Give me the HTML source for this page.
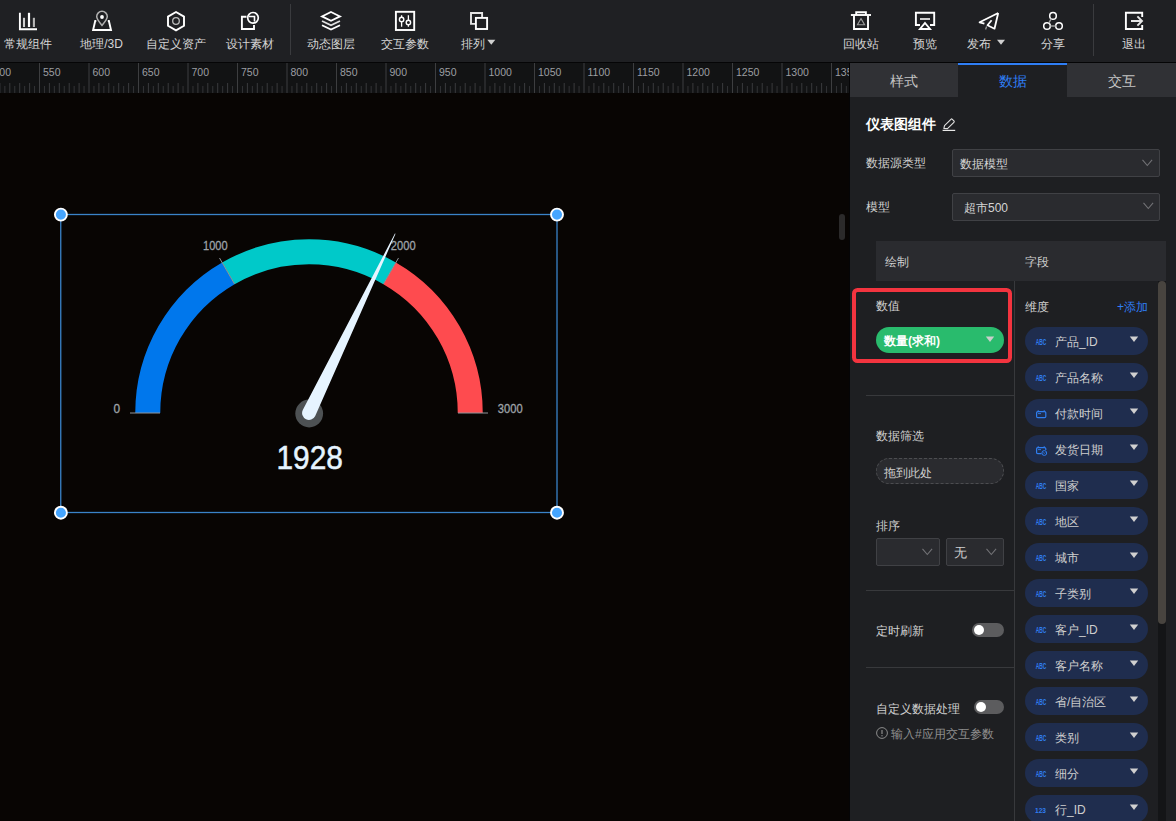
<!DOCTYPE html>
<html><head><meta charset="utf-8">
<style>
*{margin:0;padding:0;box-sizing:border-box}
html,body{width:1176px;height:821px;overflow:hidden;background:#1e1f22;font-family:"Liberation Sans",sans-serif;}
.abs{position:absolute}
.tl{position:absolute;top:36.5px;height:14px;line-height:14px;font-size:12px;color:#d4d4d4;white-space:nowrap;text-align:center}
.txt{position:absolute;margin-top:0.6px;white-space:nowrap;font-size:12px;line-height:14px;color:#d0d0d0}
</style></head><body>
<div class="abs" style="left:0;top:0;width:1176px;height:62px;background:#1f2023"></div>
<svg class="abs" style="left:0;top:0" width="1176" height="62" viewBox="0 0 1176 62">
<g stroke-linecap="butt" stroke-linejoin="miter">
<!-- chart -->
<path d="M19.9 12.8V29.2H37" stroke="#fff" fill="none" stroke-width="1.9"/>
<path d="M24 17.8V27" stroke="#cfcfcf" stroke-width="2.1" fill="none"/>
<path d="M29 12.8V27" stroke="#fff" stroke-width="2.2" fill="none"/>
<path d="M33.9 17.8V27" stroke="#b8b8b8" stroke-width="2.1" fill="none"/>
<!-- map -->
<path d="M102 25.4 C99 21.8 96.7 19.3 96.7 16.6 A5.3 5.3 0 0 1 107.3 16.6 C107.3 19.3 105 21.8 102 25.4Z" stroke="#b0b0b0" stroke-width="1.5" fill="none"/>
<circle cx="102" cy="17" r="1.9" fill="#fff"/>
<path d="M96.3 21H95.2L93.1 30H111L108.9 21H107.8" stroke="#fff" fill="none" stroke-width="1.9"/>
<!-- hexagon -->
<path d="M176 12L184 16.6V25.8L176 30.4L168 25.8V16.6Z" stroke="#fff" fill="none" stroke-width="1.9"/>
<circle cx="176" cy="21" r="3.3" stroke="#bdbdbd" stroke-width="1.3" fill="none"/>
<!-- design -->
<path d="M246.5 16.8H241.9V29H254V25" stroke="#fff" fill="none" stroke-width="1.9"/>
<circle cx="253" cy="17.8" r="5.3" stroke="#fff" fill="none" stroke-width="1.7"/>
<path d="M249 16.5H254.5V21.5" stroke="#fff" fill="none" stroke-width="1.6"/>
<!-- layers -->
<path d="M331 12L340 16.4L331 20.8L322 16.4Z" stroke="#fff" fill="none" stroke-width="1.8"/>
<path d="M322 21L331 25.3L340 21" stroke="#e0e0e0" stroke-width="1.8" fill="none"/>
<path d="M322 25.3L331 29.6L340 25.3" stroke="#fff" fill="none" stroke-width="1.8"/>
<!-- sliders -->
<rect x="395.9" y="11.8" width="18.3" height="18.2" stroke="#fff" fill="none" stroke-width="1.9"/>
<path d="M401.6 15.3V17.2M401.6 21.6V26.7M408.4 15.3V20.2M408.4 24.6V26.7" stroke="#fff" fill="none" stroke-width="1.3"/>
<circle cx="401.6" cy="19.4" r="2.2" stroke="#fff" fill="none" stroke-width="1.4"/>
<circle cx="408.4" cy="22.4" r="2.2" stroke="#fff" fill="none" stroke-width="1.4"/>
<!-- arrange -->
<path d="M475 23.9H471V13H482.1V17" stroke="#e4e4e4" stroke-width="1.9" fill="none"/>
<rect x="475.9" y="17.9" width="11.2" height="11.1" stroke="#fff" fill="none" stroke-width="1.9"/>
<!-- trash -->
<path d="M856.2 14.9V12.2H865.9V14.9" stroke="#fff" fill="none" stroke-width="1.9"/>
<path d="M850.9 15H871" stroke="#fff" fill="none" stroke-width="1.9"/>
<path d="M854 15.5V29H868V15.5" stroke="#fff" fill="none" stroke-width="1.9"/>
<path d="M861 18.6L864.6 24.8H857.4Z" stroke="#9c9c9c" stroke-width="1.1" fill="none"/>
<!-- preview -->
<path d="M920 25H915.9V12.8H934.2V25H930" stroke="#fff" fill="none" stroke-width="1.9"/>
<path d="M920 19H930" stroke="#d8d8d8" stroke-width="1.9" fill="none"/>
<path d="M925 23L930 29H920Z" stroke="#fff" fill="none" stroke-width="1.9"/>
<!-- send -->
<path d="M998.2 13L979.6 22.3L984.4 23.7M998.2 13L994.5 28.7L987.5 25.2L991.6 20.2" stroke="#fff" fill="none" stroke-width="1.8" stroke-linejoin="round"/>
<path d="M986.6 26.5L985.6 29.5" stroke="#9a9a9a" stroke-width="1.3" fill="none"/>
<!-- share -->
<circle cx="1053" cy="15.9" r="3.3" stroke="#fff" fill="none" stroke-width="1.5"/>
<circle cx="1047" cy="26" r="3.3" stroke="#fff" fill="none" stroke-width="1.5"/>
<circle cx="1059" cy="26" r="3.3" stroke="#fff" fill="none" stroke-width="1.5"/>
<path d="M1051.3 18.7L1048.8 23.2M1050.3 26H1055.7" stroke="#a0a0a0" stroke-width="1.4" fill="none"/>
<!-- exit -->
<path d="M1142.2 17V12.8H1125.9V29H1142.2V25" stroke="#fff" fill="none" stroke-width="1.9"/>
<path d="M1131 21H1141.5M1137.4 16.4L1142 21L1137.4 25.6" stroke="#e8e8e8" stroke-width="1.9" fill="none"/>
<!-- separators -->
<rect x="290" y="4" width="1" height="51" fill="#3a3b3e" stroke="none"/>
<rect x="1093" y="4" width="1" height="52" fill="#3a3b3e" stroke="none"/>
<!-- triangles -->
<path d="M487.3 39.8H495.3L491.3 44.8Z" fill="#d0d0d0" stroke="none"/>
<path d="M997 39.8H1005L1001 44.8Z" fill="#d0d0d0" stroke="none"/>
</g>
</svg>
<div class="tl" style="left:-22px;width:100px">常规组件</div><div class="tl" style="left:51.5px;width:100px">地理/3D</div><div class="tl" style="left:126px;width:100px">自定义资产</div><div class="tl" style="left:200px;width:100px">设计素材</div><div class="tl" style="left:281px;width:100px">动态图层</div><div class="tl" style="left:355px;width:100px">交互参数</div><div class="tl" style="left:422.7px;width:100px">排列</div><div class="tl" style="left:811.3px;width:100px">回收站</div><div class="tl" style="left:875.3px;width:100px">预览</div><div class="tl" style="left:929px;width:100px">发布</div><div class="tl" style="left:1003px;width:100px">分享</div><div class="tl" style="left:1083.5px;width:100px">退出</div>
<svg class="abs" style="left:0;top:62px" width="850" height="31" viewBox="0 62 850 31">
<rect x="0" y="62" width="850" height="1" fill="#050506"/>
<rect x="0" y="63" width="850" height="30" fill="#121314"/>
<g font-family="Liberation Sans" font-size="10.5" fill="#9c9ea2">
<rect x="-10.50" y="63" width="1" height="30" fill="#3d3e40"/>
<text x="-6.50" y="76">500</text>
<rect x="-5.55" y="86" width="1" height="7" fill="#333436"/>
<rect x="-0.60" y="83" width="1" height="10" fill="#3a3b3d"/>
<rect x="4.35" y="86" width="1" height="7" fill="#333436"/>
<rect x="9.30" y="83" width="1" height="10" fill="#3a3b3d"/>
<rect x="14.25" y="86" width="1" height="7" fill="#333436"/>
<rect x="19.20" y="83" width="1" height="10" fill="#3a3b3d"/>
<rect x="24.15" y="86" width="1" height="7" fill="#333436"/>
<rect x="29.10" y="83" width="1" height="10" fill="#3a3b3d"/>
<rect x="34.05" y="86" width="1" height="7" fill="#333436"/>
<rect x="39.00" y="63" width="1" height="30" fill="#3d3e40"/>
<text x="43.00" y="76">550</text>
<rect x="43.95" y="86" width="1" height="7" fill="#333436"/>
<rect x="48.90" y="83" width="1" height="10" fill="#3a3b3d"/>
<rect x="53.85" y="86" width="1" height="7" fill="#333436"/>
<rect x="58.80" y="83" width="1" height="10" fill="#3a3b3d"/>
<rect x="63.75" y="86" width="1" height="7" fill="#333436"/>
<rect x="68.70" y="83" width="1" height="10" fill="#3a3b3d"/>
<rect x="73.65" y="86" width="1" height="7" fill="#333436"/>
<rect x="78.60" y="83" width="1" height="10" fill="#3a3b3d"/>
<rect x="83.55" y="86" width="1" height="7" fill="#333436"/>
<rect x="88.50" y="63" width="1" height="30" fill="#3d3e40"/>
<text x="92.50" y="76">600</text>
<rect x="93.45" y="86" width="1" height="7" fill="#333436"/>
<rect x="98.40" y="83" width="1" height="10" fill="#3a3b3d"/>
<rect x="103.35" y="86" width="1" height="7" fill="#333436"/>
<rect x="108.30" y="83" width="1" height="10" fill="#3a3b3d"/>
<rect x="113.25" y="86" width="1" height="7" fill="#333436"/>
<rect x="118.20" y="83" width="1" height="10" fill="#3a3b3d"/>
<rect x="123.15" y="86" width="1" height="7" fill="#333436"/>
<rect x="128.10" y="83" width="1" height="10" fill="#3a3b3d"/>
<rect x="133.05" y="86" width="1" height="7" fill="#333436"/>
<rect x="138.00" y="63" width="1" height="30" fill="#3d3e40"/>
<text x="142.00" y="76">650</text>
<rect x="142.95" y="86" width="1" height="7" fill="#333436"/>
<rect x="147.90" y="83" width="1" height="10" fill="#3a3b3d"/>
<rect x="152.85" y="86" width="1" height="7" fill="#333436"/>
<rect x="157.80" y="83" width="1" height="10" fill="#3a3b3d"/>
<rect x="162.75" y="86" width="1" height="7" fill="#333436"/>
<rect x="167.70" y="83" width="1" height="10" fill="#3a3b3d"/>
<rect x="172.65" y="86" width="1" height="7" fill="#333436"/>
<rect x="177.60" y="83" width="1" height="10" fill="#3a3b3d"/>
<rect x="182.55" y="86" width="1" height="7" fill="#333436"/>
<rect x="187.50" y="63" width="1" height="30" fill="#3d3e40"/>
<text x="191.50" y="76">700</text>
<rect x="192.45" y="86" width="1" height="7" fill="#333436"/>
<rect x="197.40" y="83" width="1" height="10" fill="#3a3b3d"/>
<rect x="202.35" y="86" width="1" height="7" fill="#333436"/>
<rect x="207.30" y="83" width="1" height="10" fill="#3a3b3d"/>
<rect x="212.25" y="86" width="1" height="7" fill="#333436"/>
<rect x="217.20" y="83" width="1" height="10" fill="#3a3b3d"/>
<rect x="222.15" y="86" width="1" height="7" fill="#333436"/>
<rect x="227.10" y="83" width="1" height="10" fill="#3a3b3d"/>
<rect x="232.05" y="86" width="1" height="7" fill="#333436"/>
<rect x="237.00" y="63" width="1" height="30" fill="#3d3e40"/>
<text x="241.00" y="76">750</text>
<rect x="241.95" y="86" width="1" height="7" fill="#333436"/>
<rect x="246.90" y="83" width="1" height="10" fill="#3a3b3d"/>
<rect x="251.85" y="86" width="1" height="7" fill="#333436"/>
<rect x="256.80" y="83" width="1" height="10" fill="#3a3b3d"/>
<rect x="261.75" y="86" width="1" height="7" fill="#333436"/>
<rect x="266.70" y="83" width="1" height="10" fill="#3a3b3d"/>
<rect x="271.65" y="86" width="1" height="7" fill="#333436"/>
<rect x="276.60" y="83" width="1" height="10" fill="#3a3b3d"/>
<rect x="281.55" y="86" width="1" height="7" fill="#333436"/>
<rect x="286.50" y="63" width="1" height="30" fill="#3d3e40"/>
<text x="290.50" y="76">800</text>
<rect x="291.45" y="86" width="1" height="7" fill="#333436"/>
<rect x="296.40" y="83" width="1" height="10" fill="#3a3b3d"/>
<rect x="301.35" y="86" width="1" height="7" fill="#333436"/>
<rect x="306.30" y="83" width="1" height="10" fill="#3a3b3d"/>
<rect x="311.25" y="86" width="1" height="7" fill="#333436"/>
<rect x="316.20" y="83" width="1" height="10" fill="#3a3b3d"/>
<rect x="321.15" y="86" width="1" height="7" fill="#333436"/>
<rect x="326.10" y="83" width="1" height="10" fill="#3a3b3d"/>
<rect x="331.05" y="86" width="1" height="7" fill="#333436"/>
<rect x="336.00" y="63" width="1" height="30" fill="#3d3e40"/>
<text x="340.00" y="76">850</text>
<rect x="340.95" y="86" width="1" height="7" fill="#333436"/>
<rect x="345.90" y="83" width="1" height="10" fill="#3a3b3d"/>
<rect x="350.85" y="86" width="1" height="7" fill="#333436"/>
<rect x="355.80" y="83" width="1" height="10" fill="#3a3b3d"/>
<rect x="360.75" y="86" width="1" height="7" fill="#333436"/>
<rect x="365.70" y="83" width="1" height="10" fill="#3a3b3d"/>
<rect x="370.65" y="86" width="1" height="7" fill="#333436"/>
<rect x="375.60" y="83" width="1" height="10" fill="#3a3b3d"/>
<rect x="380.55" y="86" width="1" height="7" fill="#333436"/>
<rect x="385.50" y="63" width="1" height="30" fill="#3d3e40"/>
<text x="389.50" y="76">900</text>
<rect x="390.45" y="86" width="1" height="7" fill="#333436"/>
<rect x="395.40" y="83" width="1" height="10" fill="#3a3b3d"/>
<rect x="400.35" y="86" width="1" height="7" fill="#333436"/>
<rect x="405.30" y="83" width="1" height="10" fill="#3a3b3d"/>
<rect x="410.25" y="86" width="1" height="7" fill="#333436"/>
<rect x="415.20" y="83" width="1" height="10" fill="#3a3b3d"/>
<rect x="420.15" y="86" width="1" height="7" fill="#333436"/>
<rect x="425.10" y="83" width="1" height="10" fill="#3a3b3d"/>
<rect x="430.05" y="86" width="1" height="7" fill="#333436"/>
<rect x="435.00" y="63" width="1" height="30" fill="#3d3e40"/>
<text x="439.00" y="76">950</text>
<rect x="439.95" y="86" width="1" height="7" fill="#333436"/>
<rect x="444.90" y="83" width="1" height="10" fill="#3a3b3d"/>
<rect x="449.85" y="86" width="1" height="7" fill="#333436"/>
<rect x="454.80" y="83" width="1" height="10" fill="#3a3b3d"/>
<rect x="459.75" y="86" width="1" height="7" fill="#333436"/>
<rect x="464.70" y="83" width="1" height="10" fill="#3a3b3d"/>
<rect x="469.65" y="86" width="1" height="7" fill="#333436"/>
<rect x="474.60" y="83" width="1" height="10" fill="#3a3b3d"/>
<rect x="479.55" y="86" width="1" height="7" fill="#333436"/>
<rect x="484.50" y="63" width="1" height="30" fill="#3d3e40"/>
<text x="488.50" y="76">1000</text>
<rect x="489.45" y="86" width="1" height="7" fill="#333436"/>
<rect x="494.40" y="83" width="1" height="10" fill="#3a3b3d"/>
<rect x="499.35" y="86" width="1" height="7" fill="#333436"/>
<rect x="504.30" y="83" width="1" height="10" fill="#3a3b3d"/>
<rect x="509.25" y="86" width="1" height="7" fill="#333436"/>
<rect x="514.20" y="83" width="1" height="10" fill="#3a3b3d"/>
<rect x="519.15" y="86" width="1" height="7" fill="#333436"/>
<rect x="524.10" y="83" width="1" height="10" fill="#3a3b3d"/>
<rect x="529.05" y="86" width="1" height="7" fill="#333436"/>
<rect x="534.00" y="63" width="1" height="30" fill="#3d3e40"/>
<text x="538.00" y="76">1050</text>
<rect x="538.95" y="86" width="1" height="7" fill="#333436"/>
<rect x="543.90" y="83" width="1" height="10" fill="#3a3b3d"/>
<rect x="548.85" y="86" width="1" height="7" fill="#333436"/>
<rect x="553.80" y="83" width="1" height="10" fill="#3a3b3d"/>
<rect x="558.75" y="86" width="1" height="7" fill="#333436"/>
<rect x="563.70" y="83" width="1" height="10" fill="#3a3b3d"/>
<rect x="568.65" y="86" width="1" height="7" fill="#333436"/>
<rect x="573.60" y="83" width="1" height="10" fill="#3a3b3d"/>
<rect x="578.55" y="86" width="1" height="7" fill="#333436"/>
<rect x="583.50" y="63" width="1" height="30" fill="#3d3e40"/>
<text x="587.50" y="76">1100</text>
<rect x="588.45" y="86" width="1" height="7" fill="#333436"/>
<rect x="593.40" y="83" width="1" height="10" fill="#3a3b3d"/>
<rect x="598.35" y="86" width="1" height="7" fill="#333436"/>
<rect x="603.30" y="83" width="1" height="10" fill="#3a3b3d"/>
<rect x="608.25" y="86" width="1" height="7" fill="#333436"/>
<rect x="613.20" y="83" width="1" height="10" fill="#3a3b3d"/>
<rect x="618.15" y="86" width="1" height="7" fill="#333436"/>
<rect x="623.10" y="83" width="1" height="10" fill="#3a3b3d"/>
<rect x="628.05" y="86" width="1" height="7" fill="#333436"/>
<rect x="633.00" y="63" width="1" height="30" fill="#3d3e40"/>
<text x="637.00" y="76">1150</text>
<rect x="637.95" y="86" width="1" height="7" fill="#333436"/>
<rect x="642.90" y="83" width="1" height="10" fill="#3a3b3d"/>
<rect x="647.85" y="86" width="1" height="7" fill="#333436"/>
<rect x="652.80" y="83" width="1" height="10" fill="#3a3b3d"/>
<rect x="657.75" y="86" width="1" height="7" fill="#333436"/>
<rect x="662.70" y="83" width="1" height="10" fill="#3a3b3d"/>
<rect x="667.65" y="86" width="1" height="7" fill="#333436"/>
<rect x="672.60" y="83" width="1" height="10" fill="#3a3b3d"/>
<rect x="677.55" y="86" width="1" height="7" fill="#333436"/>
<rect x="682.50" y="63" width="1" height="30" fill="#3d3e40"/>
<text x="686.50" y="76">1200</text>
<rect x="687.45" y="86" width="1" height="7" fill="#333436"/>
<rect x="692.40" y="83" width="1" height="10" fill="#3a3b3d"/>
<rect x="697.35" y="86" width="1" height="7" fill="#333436"/>
<rect x="702.30" y="83" width="1" height="10" fill="#3a3b3d"/>
<rect x="707.25" y="86" width="1" height="7" fill="#333436"/>
<rect x="712.20" y="83" width="1" height="10" fill="#3a3b3d"/>
<rect x="717.15" y="86" width="1" height="7" fill="#333436"/>
<rect x="722.10" y="83" width="1" height="10" fill="#3a3b3d"/>
<rect x="727.05" y="86" width="1" height="7" fill="#333436"/>
<rect x="732.00" y="63" width="1" height="30" fill="#3d3e40"/>
<text x="736.00" y="76">1250</text>
<rect x="736.95" y="86" width="1" height="7" fill="#333436"/>
<rect x="741.90" y="83" width="1" height="10" fill="#3a3b3d"/>
<rect x="746.85" y="86" width="1" height="7" fill="#333436"/>
<rect x="751.80" y="83" width="1" height="10" fill="#3a3b3d"/>
<rect x="756.75" y="86" width="1" height="7" fill="#333436"/>
<rect x="761.70" y="83" width="1" height="10" fill="#3a3b3d"/>
<rect x="766.65" y="86" width="1" height="7" fill="#333436"/>
<rect x="771.60" y="83" width="1" height="10" fill="#3a3b3d"/>
<rect x="776.55" y="86" width="1" height="7" fill="#333436"/>
<rect x="781.50" y="63" width="1" height="30" fill="#3d3e40"/>
<text x="785.50" y="76">1300</text>
<rect x="786.45" y="86" width="1" height="7" fill="#333436"/>
<rect x="791.40" y="83" width="1" height="10" fill="#3a3b3d"/>
<rect x="796.35" y="86" width="1" height="7" fill="#333436"/>
<rect x="801.30" y="83" width="1" height="10" fill="#3a3b3d"/>
<rect x="806.25" y="86" width="1" height="7" fill="#333436"/>
<rect x="811.20" y="83" width="1" height="10" fill="#3a3b3d"/>
<rect x="816.15" y="86" width="1" height="7" fill="#333436"/>
<rect x="821.10" y="83" width="1" height="10" fill="#3a3b3d"/>
<rect x="826.05" y="86" width="1" height="7" fill="#333436"/>
<rect x="831.00" y="63" width="1" height="30" fill="#3d3e40"/>
<text x="835.00" y="76">1350</text>
<rect x="835.95" y="86" width="1" height="7" fill="#333436"/>
<rect x="840.90" y="83" width="1" height="10" fill="#3a3b3d"/>
<rect x="845.85" y="86" width="1" height="7" fill="#333436"/>
</g>
</svg>
<div class="abs" style="left:0;top:93px;width:850px;height:728px;background:#080503"></div>
<svg class="abs" style="left:0;top:0" width="850" height="821" viewBox="0 0 850 821">
<path d="M147.75 413.00 A161.25 161.25 0 0 1 228.38 273.35" stroke="#0077ec" stroke-width="25" fill="none"/>
<path d="M228.38 273.35 A161.25 161.25 0 0 1 389.62 273.35" stroke="#00c9c9" stroke-width="25" fill="none"/>
<path d="M389.62 273.35 A161.25 161.25 0 0 1 470.25 413.00" stroke="#fe4b4f" stroke-width="25" fill="none"/>
<line x1="160.00" y1="413.00" x2="130.00" y2="413.00" stroke="#8f959b" stroke-width="1"/>
<line x1="234.50" y1="283.96" x2="219.50" y2="257.98" stroke="#8f959b" stroke-width="1"/>
<line x1="383.50" y1="283.96" x2="398.50" y2="257.98" stroke="#8f959b" stroke-width="1"/>
<line x1="458.00" y1="413.00" x2="488.00" y2="413.00" stroke="#8f959b" stroke-width="1"/>
<g font-family="Liberation Sans" font-size="12" fill="#9ea3a8" stroke="#9ea3a8" stroke-width="0.3">
<text x="113.6" y="413" textLength="6.6" lengthAdjust="spacingAndGlyphs">0</text>
<text x="203" y="250" textLength="24.6" lengthAdjust="spacingAndGlyphs">1000</text>
<text x="390.8" y="250" textLength="24.8" lengthAdjust="spacingAndGlyphs">2000</text>
<text x="497.8" y="412.8" textLength="24.8" lengthAdjust="spacingAndGlyphs">3000</text>
</g>
<circle cx="309.2" cy="413.5" r="13.9" fill="#4d5153"/>
<path d="M315.22 415.99 L395.55 233.81 L394.92 233.50 L302.78 410.01 A6.9 6.9 0 0 0 315.22 415.99Z" fill="#e6f4ff"/>
<text x="276.5" y="468.8" font-family="Liberation Sans" font-size="32.5" fill="#e6f4ff" stroke="#e6f4ff" stroke-width="0.5" textLength="66.5" lengthAdjust="spacingAndGlyphs">1928</text>
<rect x="60.75" y="214.5" width="496.25" height="298" fill="none" stroke="#3a83c8" stroke-width="1.3"/><circle cx="60.9" cy="214.6" r="6" fill="#45a5ff" stroke="#ffffff" stroke-width="1.9"/><circle cx="557" cy="214.6" r="6" fill="#45a5ff" stroke="#ffffff" stroke-width="1.9"/><circle cx="60.9" cy="512.7" r="6" fill="#45a5ff" stroke="#ffffff" stroke-width="1.9"/><circle cx="557" cy="512.7" r="6" fill="#45a5ff" stroke="#ffffff" stroke-width="1.9"/>
<rect x="839" y="214" width="6" height="26" rx="3" fill="#2b2a2a"/>
</svg>
<!-- panel -->
<div class="abs" style="left:849px;top:62px;width:1px;height:759px;background:#050506"></div>
<div class="abs" style="left:850px;top:62px;width:326px;height:1px;background:#050506"></div>
<div class="abs" style="left:850px;top:63px;width:326px;height:758px;background:#1e1f22"></div>
<div class="abs" style="left:850px;top:63px;width:108px;height:34px;background:#303135"></div>
<div class="abs" style="left:1067px;top:63px;width:109px;height:34px;background:#303135"></div>
<div class="abs" style="left:958px;top:63px;width:109px;height:2px;background:#2f7ef5"></div>
<div class="txt" style="left:850px;top:72.3px;width:108px;text-align:center;font-size:14px;line-height:16px;color:#c4c4c4">样式</div>
<div class="txt" style="left:958px;top:72.3px;width:109px;text-align:center;font-size:14px;line-height:16px;color:#2f7ef5">数据</div>
<div class="txt" style="left:1067px;top:72.3px;width:109px;text-align:center;font-size:14px;line-height:16px;color:#c4c4c4">交互</div>
<div class="txt" style="left:866px;top:115.8px;font-size:14px;line-height:16px;color:#ffffff;font-weight:600">仪表图组件</div>
<svg class="abs" style="left:942px;top:118px" width="15" height="15" viewBox="0 0 15 15"><path d="M1.9 10.4L2.5 7.6L8.9 1.3Q9.6 0.6 10.3 1.3L11.9 2.9Q12.6 3.6 11.9 4.3L5.5 10.6Z" stroke="#e0e0e0" stroke-width="1.1" fill="none" stroke-linejoin="round"/><path d="M0.6 12.4H13.2" stroke="#e8e8e8" stroke-width="1.2"/></svg>
<div class="txt" style="left:866px;top:155px">数据源类型</div>
<div class="abs" style="left:952px;top:149px;width:208px;height:28px;border:1px solid #404145;border-radius:2px;background:#2a2b2f"></div>
<div class="txt" style="left:960px;top:156px;color:#d4d4d4">数据模型</div>
<svg class="abs" style="left:1142px;top:159px" width="11" height="8" viewBox="0 0 11 8"><path d="M0.5 0.8L5.3 6.5L10.1 0.8" stroke="#727276" stroke-width="1.1" fill="none"/></svg>
<div class="txt" style="left:866px;top:199px">模型</div>
<div class="abs" style="left:952px;top:193px;width:208px;height:28px;border:1px solid #404145;border-radius:2px;background:#2a2b2f"></div>
<div class="txt" style="left:964px;top:200px;color:#d4d4d4">超市500</div>
<svg class="abs" style="left:1143px;top:202px" width="11" height="8" viewBox="0 0 11 8"><path d="M0.5 0.8L5.3 6.5L10.1 0.8" stroke="#727276" stroke-width="1.1" fill="none"/></svg>
<div class="abs" style="left:876px;top:241px;width:290px;height:40px;background:#2a2b2f"></div>
<div class="txt" style="left:885px;top:254px">绘制</div>
<div class="txt" style="left:1025px;top:254px">字段</div>
<div class="abs" style="left:1014px;top:281px;width:1px;height:540px;background:#38393c"></div>
<div class="abs" style="left:1158px;top:281px;width:8px;height:540px;background:#141517"></div>
<div class="abs" style="left:1158px;top:281px;width:8px;height:343px;border-radius:4px;background:#48443f"></div>
<div class="abs" style="left:852px;top:288px;width:160px;height:75px;border:4.4px solid #f3343f;border-radius:5.5px"></div>
<div class="txt" style="left:876px;top:298px">数值</div>
<div class="abs" style="left:876px;top:327px;width:128px;height:26px;border-radius:13px;background:#29bb6d"></div>
<div class="txt" style="left:884px;top:333px;color:#ffffff;font-weight:bold">数量(求和)</div>
<svg class="abs" style="left:985px;top:336px" width="10" height="7" viewBox="0 0 10 7"><path d="M0.8 0.5H9.2L5 6Z" fill="#c8cfcb"/></svg>
<div class="txt" style="left:1025px;top:299px">维度</div>
<div class="txt" style="left:1117px;top:299px;color:#2f7ef5">+添加</div>
<div class="abs" style="left:1025px;top:327px;width:123px;height:28px;border-radius:14px;background:#1f2d4e"></div><svg class="abs" style="left:1035px;top:338px" width="12" height="7" viewBox="0 0 12 7"><text x="0.65" y="6.9" font-family="Liberation Sans" font-weight="bold" font-size="8.2" fill="#2f7ef0" textLength="10.6" lengthAdjust="spacingAndGlyphs">ABC</text></svg><div class="txt" style="left:1055px;top:334px;color:#cfcfcf">产品_ID</div><svg class="abs" style="left:1129px;top:336px" width="10" height="7" viewBox="0 0 10 7"><path d="M0.8 0.5H9.2L5 6Z" fill="#d0d0d0"/></svg><div class="abs" style="left:1025px;top:363px;width:123px;height:28px;border-radius:14px;background:#1f2d4e"></div><svg class="abs" style="left:1035px;top:374px" width="12" height="7" viewBox="0 0 12 7"><text x="0.65" y="6.9" font-family="Liberation Sans" font-weight="bold" font-size="8.2" fill="#2f7ef0" textLength="10.6" lengthAdjust="spacingAndGlyphs">ABC</text></svg><div class="txt" style="left:1055px;top:370px;color:#cfcfcf">产品名称</div><svg class="abs" style="left:1129px;top:372px" width="10" height="7" viewBox="0 0 10 7"><path d="M0.8 0.5H9.2L5 6Z" fill="#d0d0d0"/></svg><div class="abs" style="left:1025px;top:399px;width:123px;height:28px;border-radius:14px;background:#1f2d4e"></div><svg class="abs" style="left:1035px;top:409px" width="12" height="10" viewBox="0 0 12 10"><rect x="1.6" y="2.6" width="9.2" height="6" rx="1.2" stroke="#2f7ef0" stroke-width="1.2" fill="none"/><path d="M3.2 1.2V2.6M9.2 1.2V2.6" stroke="#2f7ef0" stroke-width="1"/><path d="M3 4.6H6" stroke="#2f7ef0" stroke-width="0.9"/></svg><div class="txt" style="left:1055px;top:406px;color:#cfcfcf">付款时间</div><svg class="abs" style="left:1129px;top:408px" width="10" height="7" viewBox="0 0 10 7"><path d="M0.8 0.5H9.2L5 6Z" fill="#d0d0d0"/></svg><div class="abs" style="left:1025px;top:435px;width:123px;height:28px;border-radius:14px;background:#1f2d4e"></div><svg class="abs" style="left:1035px;top:445px" width="13" height="11" viewBox="0 0 13 11"><path d="M6.5 8.6H2.8Q1.6 8.6 1.6 7.4V3.8Q1.6 2.6 2.8 2.6H9.6Q10.8 2.6 10.8 3.8V5" stroke="#2f7ef0" stroke-width="1.2" fill="none"/><path d="M3.2 1.2V2.6M9.2 1.2V2.6" stroke="#2f7ef0" stroke-width="1"/><path d="M3 4.6H6" stroke="#2f7ef0" stroke-width="0.9"/><circle cx="9.3" cy="8" r="2.4" fill="#1f2d4e" stroke="#2f7ef0" stroke-width="1"/><path d="M8.3 7.3L9.3 8.5L10.3 7.3" stroke="#2f7ef0" stroke-width="0.7" fill="none"/></svg><div class="txt" style="left:1055px;top:442px;color:#cfcfcf">发货日期</div><svg class="abs" style="left:1129px;top:444px" width="10" height="7" viewBox="0 0 10 7"><path d="M0.8 0.5H9.2L5 6Z" fill="#d0d0d0"/></svg><div class="abs" style="left:1025px;top:471px;width:123px;height:28px;border-radius:14px;background:#1f2d4e"></div><svg class="abs" style="left:1035px;top:482px" width="12" height="7" viewBox="0 0 12 7"><text x="0.65" y="6.9" font-family="Liberation Sans" font-weight="bold" font-size="8.2" fill="#2f7ef0" textLength="10.6" lengthAdjust="spacingAndGlyphs">ABC</text></svg><div class="txt" style="left:1055px;top:478px;color:#cfcfcf">国家</div><svg class="abs" style="left:1129px;top:480px" width="10" height="7" viewBox="0 0 10 7"><path d="M0.8 0.5H9.2L5 6Z" fill="#d0d0d0"/></svg><div class="abs" style="left:1025px;top:507px;width:123px;height:28px;border-radius:14px;background:#1f2d4e"></div><svg class="abs" style="left:1035px;top:518px" width="12" height="7" viewBox="0 0 12 7"><text x="0.65" y="6.9" font-family="Liberation Sans" font-weight="bold" font-size="8.2" fill="#2f7ef0" textLength="10.6" lengthAdjust="spacingAndGlyphs">ABC</text></svg><div class="txt" style="left:1055px;top:514px;color:#cfcfcf">地区</div><svg class="abs" style="left:1129px;top:516px" width="10" height="7" viewBox="0 0 10 7"><path d="M0.8 0.5H9.2L5 6Z" fill="#d0d0d0"/></svg><div class="abs" style="left:1025px;top:543px;width:123px;height:28px;border-radius:14px;background:#1f2d4e"></div><svg class="abs" style="left:1035px;top:554px" width="12" height="7" viewBox="0 0 12 7"><text x="0.65" y="6.9" font-family="Liberation Sans" font-weight="bold" font-size="8.2" fill="#2f7ef0" textLength="10.6" lengthAdjust="spacingAndGlyphs">ABC</text></svg><div class="txt" style="left:1055px;top:550px;color:#cfcfcf">城市</div><svg class="abs" style="left:1129px;top:552px" width="10" height="7" viewBox="0 0 10 7"><path d="M0.8 0.5H9.2L5 6Z" fill="#d0d0d0"/></svg><div class="abs" style="left:1025px;top:579px;width:123px;height:28px;border-radius:14px;background:#1f2d4e"></div><svg class="abs" style="left:1035px;top:590px" width="12" height="7" viewBox="0 0 12 7"><text x="0.65" y="6.9" font-family="Liberation Sans" font-weight="bold" font-size="8.2" fill="#2f7ef0" textLength="10.6" lengthAdjust="spacingAndGlyphs">ABC</text></svg><div class="txt" style="left:1055px;top:586px;color:#cfcfcf">子类别</div><svg class="abs" style="left:1129px;top:588px" width="10" height="7" viewBox="0 0 10 7"><path d="M0.8 0.5H9.2L5 6Z" fill="#d0d0d0"/></svg><div class="abs" style="left:1025px;top:615px;width:123px;height:28px;border-radius:14px;background:#1f2d4e"></div><svg class="abs" style="left:1035px;top:626px" width="12" height="7" viewBox="0 0 12 7"><text x="0.65" y="6.9" font-family="Liberation Sans" font-weight="bold" font-size="8.2" fill="#2f7ef0" textLength="10.6" lengthAdjust="spacingAndGlyphs">ABC</text></svg><div class="txt" style="left:1055px;top:622px;color:#cfcfcf">客户_ID</div><svg class="abs" style="left:1129px;top:624px" width="10" height="7" viewBox="0 0 10 7"><path d="M0.8 0.5H9.2L5 6Z" fill="#d0d0d0"/></svg><div class="abs" style="left:1025px;top:651px;width:123px;height:28px;border-radius:14px;background:#1f2d4e"></div><svg class="abs" style="left:1035px;top:662px" width="12" height="7" viewBox="0 0 12 7"><text x="0.65" y="6.9" font-family="Liberation Sans" font-weight="bold" font-size="8.2" fill="#2f7ef0" textLength="10.6" lengthAdjust="spacingAndGlyphs">ABC</text></svg><div class="txt" style="left:1055px;top:658px;color:#cfcfcf">客户名称</div><svg class="abs" style="left:1129px;top:660px" width="10" height="7" viewBox="0 0 10 7"><path d="M0.8 0.5H9.2L5 6Z" fill="#d0d0d0"/></svg><div class="abs" style="left:1025px;top:687px;width:123px;height:28px;border-radius:14px;background:#1f2d4e"></div><svg class="abs" style="left:1035px;top:698px" width="12" height="7" viewBox="0 0 12 7"><text x="0.65" y="6.9" font-family="Liberation Sans" font-weight="bold" font-size="8.2" fill="#2f7ef0" textLength="10.6" lengthAdjust="spacingAndGlyphs">ABC</text></svg><div class="txt" style="left:1055px;top:694px;color:#cfcfcf">省/自治区</div><svg class="abs" style="left:1129px;top:696px" width="10" height="7" viewBox="0 0 10 7"><path d="M0.8 0.5H9.2L5 6Z" fill="#d0d0d0"/></svg><div class="abs" style="left:1025px;top:723px;width:123px;height:28px;border-radius:14px;background:#1f2d4e"></div><svg class="abs" style="left:1035px;top:734px" width="12" height="7" viewBox="0 0 12 7"><text x="0.65" y="6.9" font-family="Liberation Sans" font-weight="bold" font-size="8.2" fill="#2f7ef0" textLength="10.6" lengthAdjust="spacingAndGlyphs">ABC</text></svg><div class="txt" style="left:1055px;top:730px;color:#cfcfcf">类别</div><svg class="abs" style="left:1129px;top:732px" width="10" height="7" viewBox="0 0 10 7"><path d="M0.8 0.5H9.2L5 6Z" fill="#d0d0d0"/></svg><div class="abs" style="left:1025px;top:759px;width:123px;height:28px;border-radius:14px;background:#1f2d4e"></div><svg class="abs" style="left:1035px;top:770px" width="12" height="7" viewBox="0 0 12 7"><text x="0.65" y="6.9" font-family="Liberation Sans" font-weight="bold" font-size="8.2" fill="#2f7ef0" textLength="10.6" lengthAdjust="spacingAndGlyphs">ABC</text></svg><div class="txt" style="left:1055px;top:766px;color:#cfcfcf">细分</div><svg class="abs" style="left:1129px;top:768px" width="10" height="7" viewBox="0 0 10 7"><path d="M0.8 0.5H9.2L5 6Z" fill="#d0d0d0"/></svg><div class="abs" style="left:1025px;top:795px;width:123px;height:28px;border-radius:14px;background:#1f2d4e"></div><svg class="abs" style="left:1035px;top:806px" width="12" height="7" viewBox="0 0 12 7"><text x="0" y="6.5" font-family="Liberation Sans" font-weight="bold" font-size="8" fill="#2f7ef0" textLength="11" lengthAdjust="spacingAndGlyphs">123</text></svg><div class="txt" style="left:1055px;top:802px;color:#cfcfcf">行_ID</div><svg class="abs" style="left:1129px;top:804px" width="10" height="7" viewBox="0 0 10 7"><path d="M0.8 0.5H9.2L5 6Z" fill="#d0d0d0"/></svg>
<div class="abs" style="left:866px;top:395px;width:148px;height:1px;background:#38393c"></div>
<div class="txt" style="left:876px;top:428px">数据筛选</div>
<div class="abs" style="left:876px;top:458px;width:128px;height:26px;border-radius:13px;background:#2a2b2f;border:1px dashed #4c4d50"></div>
<div class="txt" style="left:884px;top:465px">拖到此处</div>
<div class="txt" style="left:876px;top:518px">排序</div>
<div class="abs" style="left:876px;top:538px;width:64px;height:28px;border:1px solid #404145;border-radius:2px;background:#2a2b2f"></div>
<svg class="abs" style="left:922px;top:548px" width="11" height="8" viewBox="0 0 11 8"><path d="M0.5 0.8L5.3 6.5L10.1 0.8" stroke="#727276" stroke-width="1.1" fill="none"/></svg>
<div class="abs" style="left:946px;top:538px;width:58px;height:28px;border:1px solid #404145;border-radius:2px;background:#2a2b2f"></div>
<div class="txt" style="left:954px;top:545px;font-size:13px">无</div>
<svg class="abs" style="left:986px;top:548px" width="11" height="8" viewBox="0 0 11 8"><path d="M0.5 0.8L5.3 6.5L10.1 0.8" stroke="#727276" stroke-width="1.1" fill="none"/></svg>
<div class="abs" style="left:866px;top:590px;width:148px;height:1px;background:#38393c"></div>
<div class="txt" style="left:876px;top:623px">定时刷新</div>
<div class="abs" style="left:972px;top:623px;width:32px;height:14px;border-radius:7px;background:#5c5c5e"></div>
<div class="abs" style="left:974px;top:625px;width:10px;height:10px;border-radius:5px;background:#ffffff"></div>
<div class="abs" style="left:866px;top:667px;width:148px;height:1px;background:#38393c"></div>
<div class="txt" style="left:876px;top:701px">自定义数据处理</div>
<div class="abs" style="left:974px;top:700px;width:30px;height:14px;border-radius:7px;background:#5c5c5e"></div>
<div class="abs" style="left:976px;top:702px;width:10px;height:10px;border-radius:5px;background:#ffffff"></div>
<svg class="abs" style="left:876px;top:727px" width="12" height="12" viewBox="0 0 12 12"><circle cx="6" cy="6" r="5.4" stroke="#8c8c8c" stroke-width="1" fill="none"/><path d="M6 3V7" stroke="#8c8c8c" stroke-width="1.2"/><circle cx="6" cy="8.8" r="0.7" fill="#8c8c8c"/></svg>
<div class="txt" style="left:891px;top:726px;color:#8e8e8e">输入#应用交互参数</div>
</body></html>
